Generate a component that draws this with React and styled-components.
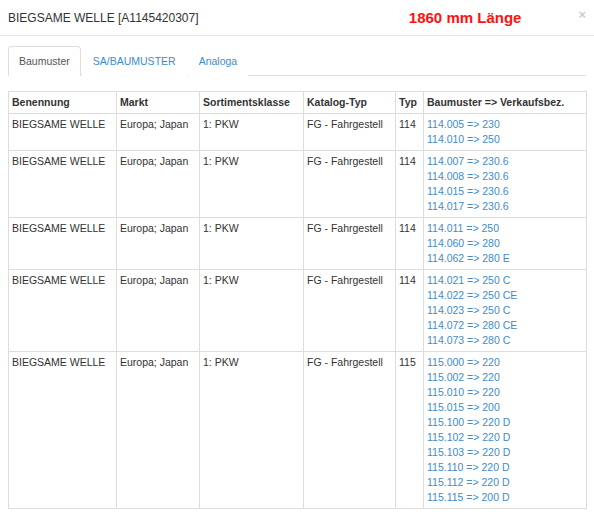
import React from "react";
import styled, { createGlobalStyle } from "styled-components";

const GlobalStyle = createGlobalStyle`
  html, body { margin: 0; padding: 0; background: #fff; }
  body {
    font-family: "Liberation Sans", Helvetica, Arial, sans-serif;
    color: #333;
    font-size: 10.5px;
    line-height: 15px;
  }
  * { box-sizing: border-box; }
`;

const Modal = styled.div`
  width: 594px;
  background: #fff;
`;

const Header = styled.div`
  display: flex;
  align-items: center;
  height: 36px;
  padding: 1px 8px 0 8px;
  border-bottom: 1px solid #e5e5e5;
`;

const Title = styled.h4`
  margin: 0;
  font-size: 12px;
  font-weight: normal;
  line-height: 16px;
  color: #333;
`;

const Length = styled.span`
  margin-left: auto;
  margin-right: 57px;
  font-size: 15px;
  font-weight: bold;
  line-height: 18px;
  color: #f11;
`;

const Close = styled.button`
  border: 0;
  background: none;
  padding: 0;
  font-family: inherit;
  font-size: 13px;
  font-weight: bold;
  line-height: 14px;
  color: #000;
  opacity: 0.2;
  cursor: pointer;
  margin-top: -6px;
`;

const Body = styled.div`
  padding: 10px 8px 8px 8px;
`;

const Tabs = styled.ul`
  display: flex;
  list-style: none;
  margin: 0;
  padding: 0;
  border-bottom: 1px solid #ddd;
`;

const TabItem = styled.li`
  margin: 0 1px -1px 0;
`;

const TabLink = styled.a`
  display: block;
  padding: 7px 10px 6px;
  line-height: 15px;
  border: 1px solid ${(p) => (p.$active ? "#ddd" : "transparent")};
  border-bottom-color: ${(p) => (p.$active ? "#fff" : "transparent")};
  border-radius: 4px 4px 0 0;
  background: #fff;
  color: ${(p) => (p.$active ? "#555" : "#428bca")};
  text-decoration: none;
  cursor: pointer;
`;

const Table = styled.table`
  margin-top: 15px;
  width: 578px;
  table-layout: fixed;
  border-collapse: collapse;
  border: 1px solid #ddd;
`;

const Th = styled.th`
  text-align: left;
  font-weight: bold;
  padding: 3px;
  line-height: 15px;
  border: 1px solid #ddd;
  vertical-align: bottom;
  white-space: nowrap;
`;

const Td = styled.td`
  padding: 3px;
  line-height: 15px;
  border: 1px solid #ddd;
  vertical-align: top;
  white-space: nowrap;
`;

const LinkLine = styled.a`
  display: block;
  color: #428bca;
  text-decoration: none;
`;

const rows = [
  { typ: "114", links: ["114.005 => 230", "114.010 => 250"] },
  {
    typ: "114",
    links: ["114.007 => 230.6", "114.008 => 230.6", "114.015 => 230.6", "114.017 => 230.6"],
  },
  { typ: "114", links: ["114.011 => 250", "114.060 => 280", "114.062 => 280 E"] },
  {
    typ: "114",
    links: [
      "114.021 => 250 C",
      "114.022 => 250 CE",
      "114.023 => 250 C",
      "114.072 => 280 CE",
      "114.073 => 280 C",
    ],
  },
  {
    typ: "115",
    links: [
      "115.000 => 220",
      "115.002 => 220",
      "115.010 => 220",
      "115.015 => 200",
      "115.100 => 220 D",
      "115.102 => 220 D",
      "115.103 => 220 D",
      "115.110 => 220 D",
      "115.112 => 220 D",
      "115.115 => 200 D",
    ],
  },
];

const widths = [108, 83, 104, 92, 28, 163];

export default function App() {
  return (
    <>
      <GlobalStyle />
      <Modal>
        <Header>
          <Title>BIEGSAME WELLE [A1145420307]</Title>
          <Length>1860 mm Länge</Length>
          <Close aria-label="Close">×</Close>
        </Header>
        <Body>
          <Tabs>
            <TabItem>
              <TabLink $active>Baumuster</TabLink>
            </TabItem>
            <TabItem>
              <TabLink>SA/BAUMUSTER</TabLink>
            </TabItem>
            <TabItem>
              <TabLink>Analoga</TabLink>
            </TabItem>
          </Tabs>
          <Table>
            <colgroup>
              {widths.map((w, i) => (
                <col key={i} style={{ width: w }} />
              ))}
            </colgroup>
            <thead>
              <tr>
                <Th>Benennung</Th>
                <Th>Markt</Th>
                <Th>Sortimentsklasse</Th>
                <Th>Katalog-Typ</Th>
                <Th>Typ</Th>
                <Th>Baumuster =&gt; Verkaufsbez.</Th>
              </tr>
            </thead>
            <tbody>
              {rows.map((r, i) => (
                <tr key={i}>
                  <Td>BIEGSAME WELLE</Td>
                  <Td>Europa; Japan</Td>
                  <Td>1: PKW</Td>
                  <Td>FG - Fahrgestell</Td>
                  <Td>{r.typ}</Td>
                  <Td>
                    {r.links.map((l) => (
                      <LinkLine key={l}>{l}</LinkLine>
                    ))}
                  </Td>
                </tr>
              ))}
            </tbody>
          </Table>
        </Body>
      </Modal>
    </>
  );
}
